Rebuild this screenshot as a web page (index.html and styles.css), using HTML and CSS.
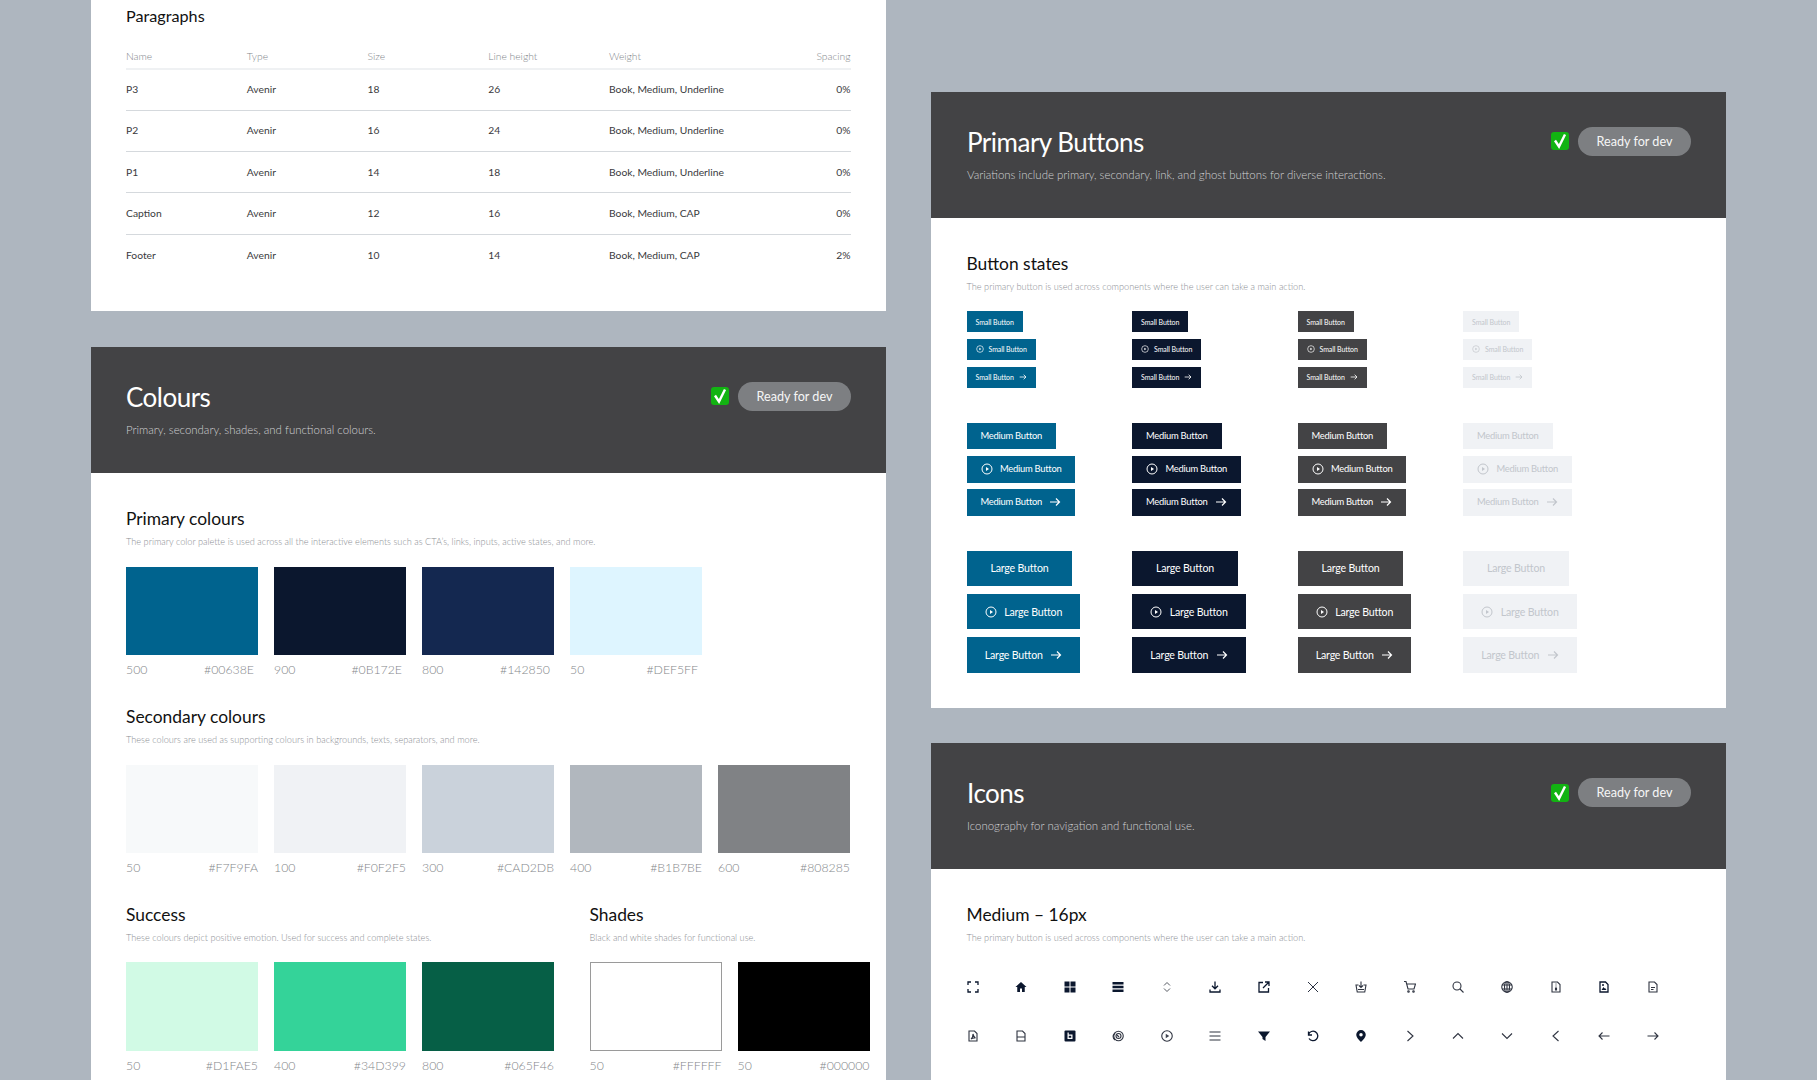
FILE: index.html
```html
<!DOCTYPE html>
<html lang="en">
<head>
<meta charset="utf-8">
<title>Design system</title>
<link rel="stylesheet" href="styles.css">
</head>
<body>
<svg class="sprite" xmlns="http://www.w3.org/2000/svg">
  <symbol id="play" viewBox="0 0 24 24"><circle cx="12" cy="12" r="10" fill="none" stroke="currentColor" stroke-width="2"/><path d="M10 8l6 4-6 4z" fill="currentColor"/></symbol>
  <symbol id="arrow" viewBox="0 0 24 24"><path d="M2 12h19M14 5l7 7-7 7" fill="none" stroke="currentColor" stroke-width="2.4"/></symbol>
  <symbol id="check" viewBox="0 0 18 18"><rect x="0" y="0" width="18" height="18" rx="3" fill="#12b312"/><path d="M4 8.5l4 6 6-12" fill="none" stroke="#fff" stroke-width="2.4"/></symbol>
</svg>
<main class="board">
  <div class="col col-left">
    <section class="panel panel-para">
      <h3 class="h3">Paragraphs</h3>
      <table class="spec">
        <thead><tr><th>Name</th><th>Type</th><th>Size</th><th>Line height</th><th>Weight</th><th class="r">Spacing</th></tr></thead>
        <tbody>
          <tr><td>P3</td><td>Avenir</td><td>18</td><td>26</td><td>Book, Medium, Underline</td><td class="r">0%</td></tr>
          <tr><td>P2</td><td>Avenir</td><td>16</td><td>24</td><td>Book, Medium, Underline</td><td class="r">0%</td></tr>
          <tr><td>P1</td><td>Avenir</td><td>14</td><td>18</td><td>Book, Medium, Underline</td><td class="r">0%</td></tr>
          <tr><td>Caption</td><td>Avenir</td><td>12</td><td>16</td><td>Book, Medium, CAP</td><td class="r">0%</td></tr>
          <tr><td>Footer</td><td>Avenir</td><td>10</td><td>14</td><td>Book, Medium, CAP</td><td class="r">2%</td></tr>
        </tbody>
      </table>
    </section>

    <section class="panel">
      <header class="head">
        <div>
          <h2 class="h2">Colours</h2>
          <p class="lead">Primary, secondary, shades, and functional colours.</p>
        </div>
        <div class="status"><svg class="tick"><use href="#check"/></svg><span class="pill">Ready for dev</span></div>
      </header>
      <div class="body body-colours">
        <h3 class="h3">Primary colours</h3>
        <p class="sub">The primary color palette is used across all the interactive elements such as CTA’s, links, inputs, active states, and more.</p>
        <div class="swatches inset">
          <div class="swatch"><div class="chip c-00638e"></div><div class="meta"><span>500</span><span>#00638E</span></div></div>
          <div class="swatch"><div class="chip c-0b172e"></div><div class="meta"><span>900</span><span>#0B172E</span></div></div>
          <div class="swatch"><div class="chip c-142850"></div><div class="meta"><span>800</span><span>#142850</span></div></div>
          <div class="swatch"><div class="chip c-def5ff"></div><div class="meta"><span>50</span><span>#DEF5FF</span></div></div>
        </div>
        <h3 class="h3 next">Secondary colours</h3>
        <p class="sub">These colours are used as supporting colours in backgrounds, texts, separators, and more.</p>
        <div class="swatches">
          <div class="swatch"><div class="chip c-f7f9fa"></div><div class="meta"><span>50</span><span>#F7F9FA</span></div></div>
          <div class="swatch"><div class="chip c-f0f2f5"></div><div class="meta"><span>100</span><span>#F0F2F5</span></div></div>
          <div class="swatch"><div class="chip c-cad2db"></div><div class="meta"><span>300</span><span>#CAD2DB</span></div></div>
          <div class="swatch"><div class="chip c-b1b7be"></div><div class="meta"><span>400</span><span>#B1B7BE</span></div></div>
          <div class="swatch"><div class="chip c-808285"></div><div class="meta"><span>600</span><span>#808285</span></div></div>
        </div>
        <div class="pair">
          <div class="group">
            <h3 class="h3">Success</h3>
            <p class="sub">These colours depict positive emotion. Used for success and complete states.</p>
            <div class="swatches">
              <div class="swatch"><div class="chip c-d1fae5"></div><div class="meta"><span>50</span><span>#D1FAE5</span></div></div>
              <div class="swatch"><div class="chip c-34d399"></div><div class="meta"><span>400</span><span>#34D399</span></div></div>
              <div class="swatch"><div class="chip c-065f46"></div><div class="meta"><span>800</span><span>#065F46</span></div></div>
            </div>
          </div>
          <div class="group">
            <h3 class="h3">Shades</h3>
            <p class="sub">Black and white shades for functional use.</p>
            <div class="swatches">
              <div class="swatch"><div class="chip c-ffffff"></div><div class="meta"><span>50</span><span>#FFFFFF</span></div></div>
              <div class="swatch"><div class="chip c-000000"></div><div class="meta"><span>50</span><span>#000000</span></div></div>
            </div>
          </div>
        </div>
      </div>
    </section>
  </div>

  <div class="col col-right">
    <section class="panel">
      <header class="head">
        <div>
          <h2 class="h2">Primary Buttons</h2>
          <p class="lead">Variations include primary, secondary, link, and ghost buttons for diverse interactions.</p>
        </div>
        <div class="status"><svg class="tick"><use href="#check"/></svg><span class="pill">Ready for dev</span></div>
      </header>
      <div class="body body-btn">
        <h3 class="h3">Button states</h3>
        <p class="sub">The primary button is used across components where the user can take a main action.</p>
        <div class="states">
          <div class="state blue">
            <div class="stack sm"><a class="btn">Small Button</a><a class="btn ic"><svg><use href="#play"/></svg>Small Button</a><a class="btn ar">Small Button<svg><use href="#arrow"/></svg></a></div>
            <div class="stack md"><a class="btn">Medium Button</a><a class="btn ic"><svg><use href="#play"/></svg>Medium Button</a><a class="btn ar">Medium Button<svg><use href="#arrow"/></svg></a></div>
            <div class="stack lg"><a class="btn">Large Button</a><a class="btn ic"><svg><use href="#play"/></svg>Large Button</a><a class="btn ar">Large Button<svg><use href="#arrow"/></svg></a></div>
          </div>
          <div class="state navy">
            <div class="stack sm"><a class="btn">Small Button</a><a class="btn ic"><svg><use href="#play"/></svg>Small Button</a><a class="btn ar">Small Button<svg><use href="#arrow"/></svg></a></div>
            <div class="stack md"><a class="btn">Medium Button</a><a class="btn ic"><svg><use href="#play"/></svg>Medium Button</a><a class="btn ar">Medium Button<svg><use href="#arrow"/></svg></a></div>
            <div class="stack lg"><a class="btn">Large Button</a><a class="btn ic"><svg><use href="#play"/></svg>Large Button</a><a class="btn ar">Large Button<svg><use href="#arrow"/></svg></a></div>
          </div>
          <div class="state grey">
            <div class="stack sm"><a class="btn">Small Button</a><a class="btn ic"><svg><use href="#play"/></svg>Small Button</a><a class="btn ar">Small Button<svg><use href="#arrow"/></svg></a></div>
            <div class="stack md"><a class="btn">Medium Button</a><a class="btn ic"><svg><use href="#play"/></svg>Medium Button</a><a class="btn ar">Medium Button<svg><use href="#arrow"/></svg></a></div>
            <div class="stack lg"><a class="btn">Large Button</a><a class="btn ic"><svg><use href="#play"/></svg>Large Button</a><a class="btn ar">Large Button<svg><use href="#arrow"/></svg></a></div>
          </div>
          <div class="state off">
            <div class="stack sm"><a class="btn">Small Button</a><a class="btn ic"><svg><use href="#play"/></svg>Small Button</a><a class="btn ar">Small Button<svg><use href="#arrow"/></svg></a></div>
            <div class="stack md"><a class="btn">Medium Button</a><a class="btn ic"><svg><use href="#play"/></svg>Medium Button</a><a class="btn ar">Medium Button<svg><use href="#arrow"/></svg></a></div>
            <div class="stack lg"><a class="btn">Large Button</a><a class="btn ic"><svg><use href="#play"/></svg>Large Button</a><a class="btn ar">Large Button<svg><use href="#arrow"/></svg></a></div>
          </div>
        </div>
      </div>
    </section>

    <section class="panel">
      <header class="head">
        <div>
          <h2 class="h2">Icons</h2>
          <p class="lead">Iconography for navigation and functional use.</p>
        </div>
        <div class="status"><svg class="tick"><use href="#check"/></svg><span class="pill">Ready for dev</span></div>
      </header>
      <div class="body body-icons">
        <h3 class="h3">Medium – 16px</h3>
        <p class="sub">The primary button is used across components where the user can take a main action.</p>
        <div class="icons">
          <svg viewBox="0 0 24 24" class="line thick"><path d="M2 8V2h6M16 2h6v6M22 16v6h-6M8 22H2v-6"/></svg>
          <svg viewBox="0 0 24 24" class="solid"><path d="M12 2L1 12h3.500v10h5.500v-7h4v7h5.500V12H23z"/></svg>
          <svg viewBox="0 0 24 24" class="solid"><path d="M1 1h10v10H1zM13 1h10v10H13zM1 13h10v10H1zM13 13h10v10H13z"/></svg>
          <svg viewBox="0 0 24 24" class="solid"><path d="M1 2h22v5H1zM1 9.500h22v5H1zM1 17h22v5H1z"/></svg>
          <svg viewBox="0 0 24 24" class="line soft"><path d="M6 9l6-6 6 6M6 15l6 6 6-6"/></svg>
          <svg viewBox="0 0 24 24" class="line thick"><path d="M12 1v14M6 9.500l6 6 6-6M2 17v5h20v-5"/></svg>
          <svg viewBox="0 0 24 24" class="line thick"><path d="M10 3H2v19h19v-8M14 2h8v8M22 2L10 14"/></svg>
          <svg viewBox="0 0 24 24" class="line"><path d="M2 2l20 20M22 2L2 22"/></svg>
          <svg viewBox="0 0 24 24" class="line mid"><path d="M12 1v12M8 9l4 4 4-4M7 8H2l2.500 14h15L22 8h-5M6 17h12"/></svg>
          <svg viewBox="0 0 24 24" class="line mid"><path d="M0 1h4l4 15h12l3-10H6"/><circle cx="9" cy="21" r="1.500"/><circle cx="19" cy="21" r="1.500"/></svg>
          <svg viewBox="0 0 24 24" class="line mid"><circle cx="10" cy="10" r="8"/><path d="M16 16l7 7"/></svg>
          <svg viewBox="0 0 24 24" class="line mid"><circle cx="12" cy="12" r="10.500"/><ellipse cx="12" cy="12" rx="5" ry="10.500"/><path d="M2 8h20M2 16h20M12 1v22"/></svg>
          <svg viewBox="0 0 24 24" class="line mid"><path d="M4 2h11l5 5v15H4zM11 6h2M11 10h2M11 14h2v4h-2z"/></svg>
          <svg viewBox="0 0 24 24" class="line dark"><path d="M4 2h11l5 5v15H4z"/><path class="fill" d="M7 18l4-6 2 3 1-1 3 4z"/><circle class="fill" cx="10" cy="8" r="2"/></svg>
          <svg viewBox="0 0 24 24" class="line mid"><path d="M4 2h11l5 5v15H4zM8 13h8M8 17h5"/></svg>

          <svg viewBox="0 0 24 24" class="line mid"><path d="M4 2h11l5 5v15H4zM8 18c3-2 4-6 4-10 1 4 2 7 5 8-4-1-6 0-9 2z"/></svg>
          <svg viewBox="0 0 24 24" class="line mid"><path d="M4 2h11l5 5v15H4zM4 14h16"/></svg>
          <svg viewBox="0 0 24 24"><path class="box" d="M3 1h18a2 2 0 0 1 2 2v18a2 2 0 0 1-2 2H3a2 2 0 0 1-2-2V3a2 2 0 0 1 2-2z"/><path class="cut" d="M7 5h2.500v4H17v9H7zM9.500 11.500v4H14.500v-4z" fill-rule="evenodd"/></svg>
          <svg viewBox="0 0 24 24" class="line mid"><circle cx="13" cy="12" r="5"/><circle cx="13" cy="12" r="9.500"/><path d="M6 6c-5 5-5 10 0 14M10 10l4 4"/></svg>
          <svg viewBox="0 0 24 24" class="line mid"><circle cx="12" cy="12" r="10.500"/><path class="fill" d="M9.500 7.500l7 4.500-7 4.500z"/></svg>
          <svg viewBox="0 0 24 24" class="line mid"><path d="M1 4h22M1 12h22M1 20h22"/></svg>
          <svg viewBox="0 0 24 24" class="solid"><path d="M0 3h24L15 14v8l-6-4v-4z"/></svg>
          <svg viewBox="0 0 24 24" class="line thick"><path d="M3 3v7h7M3 9a9.500 9.500 0 1 1 1 8"/></svg>
          <svg viewBox="0 0 24 24" class="solid"><path fill-rule="evenodd" d="M12 0a9.500 9.500 0 0 0-9.500 9.500C2.500 16 12 24 12 24s9.500-8 9.500-14.500A9.500 9.500 0 0 0 12 0zm0 6a3.500 3.500 0 1 1 0 7 3.500 3.500 0 0 1 0-7z"/></svg>
          <svg viewBox="0 0 24 24" class="line mid"><path d="M7 2l11 10L7 22"/></svg>
          <svg viewBox="0 0 24 24" class="line mid"><path d="M2 17L12 7l10 10"/></svg>
          <svg viewBox="0 0 24 24" class="line mid"><path d="M2 7l10 10L22 7"/></svg>
          <svg viewBox="0 0 24 24" class="line mid"><path d="M17 2L6 12l11 10"/></svg>
          <svg viewBox="0 0 24 24" class="line mid"><path d="M23 12H2M9 5l-7 7 7 7"/></svg>
          <svg viewBox="0 0 24 24" class="line mid"><path d="M1 12h21M15 5l7 7-7 7"/></svg>
        </div>
      </div>
    </section>
  </div>
</main>
</body>
</html>
```

FILE: styles.css
```css
* { box-sizing: border-box; }
html, body { margin: 0; padding: 0; height: 1080px; overflow: hidden; }
body { background: #aeb6bf; font-family: "Lato", "Liberation Sans", sans-serif; color: #1b1b1d; }
.sprite { display: none; }

.board { display: flex; gap: 45px; padding-left: 91px; align-items: flex-start; }
.col { width: 795px; flex: none; display: flex; flex-direction: column; }
.col-left { gap: 35.7px; }
.col-right { gap: 35.3px; padding-top: 91.5px; }

.panel { background: #fff; }
.panel-para { height: 311px; padding: 5.5px 35px 0; }

.h3 { margin: 0; font-size: 17.4px; line-height: 20px; font-weight: 400; color: #111; }
.panel-para .h3 { font-size: 16.2px; }
.next { margin-top: 28.7px; }
.sub { margin: 6px 0 17.7px; font-size: 9.2px; line-height: 14px; font-weight: 300; color: #8b8e93; white-space: nowrap; }
.body-btn .sub { margin-bottom: 17.300px; }

.spec { width: 724.500px; margin-top: 20.500px; border-collapse: collapse; table-layout: fixed; font-size: 10.300px; }
.spec th { height: 23px; padding: 0 0 2px; text-align: left; font-weight: 300; color: #82868b; border-bottom: 2px solid #eff1f3; }
.spec td { height: 41.300px; padding: 0 0 1px; color: #3a3a3d; border-bottom: 1px solid #d5d9dd; }
.spec tr:last-child td { border-bottom: 0; }
.spec .r { text-align: right; }

.head { height: 126.500px; padding: 33px 35px 0; background: #434345; display: flex; justify-content: space-between; align-items: flex-start; color: #fff; }
.col-right .head { padding-left: 36px; }
.h2 { margin: 0; font-size: 26px; line-height: 34px; font-weight: 400; letter-spacing: -0.5px; }
.lead { margin: 8px 0 0; font-size: 11.450px; line-height: 16px; font-weight: 300; color: #d0d1d3; }
.status { display: flex; align-items: center; gap: 9px; padding-top: 2px; }
.tick { width: 18px; height: 18px; }
.pill { width: 113px; height: 29.500px; border-radius: 15px; background: #7d7f82; display: flex; align-items: center; justify-content: center; font-size: 12.600px; color: #f6f6f6; }

.body { padding: 36px 35px 0; }
.col-right .body { padding-left: 35.500px; }
.body-btn { padding-bottom: 35px; }
.body-colours { padding-bottom: 40px; }
.body-icons { padding-bottom: 60px; }

.swatches { display: flex; gap: 16px; }
.swatch { width: 132px; flex: none; }
.chip { height: 88.300px; }
.meta { margin-top: 7px; display: flex; justify-content: space-between; font-size: 12.300px; line-height: 16px; font-weight: 300; color: #84878b; }
.inset .meta { padding-right: 4px; }

.c-00638e { background: #00638e; }
.c-0b172e { background: #0b172e; }
.c-142850 { background: #142850; }
.c-def5ff { background: #def5ff; }
.c-f7f9fa { background: #f7f9fa; }
.c-f0f2f5 { background: #f0f2f5; }
.c-cad2db { background: #cad2db; }
.c-b1b7be { background: #b1b7be; }
.c-808285 { background: #808285; }
.c-d1fae5 { background: #d1fae5; }
.c-34d399 { background: #34d399; }
.c-065f46 { background: #065f46; }
.c-ffffff { background: #fff; border: 1px solid #9a9a9a; }
.c-000000 { background: #000; }

.pair { margin-top: 28.700px; display: flex; gap: 35.500px; }
.group { flex: none; }

.states { display: grid; grid-template-columns: repeat(4, 165.500px); }
.state { display: flex; flex-direction: column; gap: 35px; align-items: flex-start; }
.stack { display: flex; flex-direction: column; align-items: flex-start; }
.btn { display: flex; align-items: center; white-space: nowrap; letter-spacing: -0.2px; }
.blue .btn { background: #00638e; color: #fff; }
.navy .btn { background: #0b172e; color: #fff; }
.grey .btn { background: #434345; color: #fff; }
.off .btn { background: #f0f2f5; color: #c2c6cc; }

.sm { gap: 6.700px; }
.sm .btn { height: 21px; padding: 0 9px; font-size: 7px; letter-spacing: -0.08px; }
.sm svg { width: 8px; height: 8px; }
.sm .ic svg { margin-right: 5px; }
.sm .ar svg { margin-left: 5px; }

.md { gap: 6.500px; }
.md .btn { height: 26.700px; padding: 0 14px 1px; font-size: 9.400px; letter-spacing: -0.25px; }
.md svg { width: 12px; height: 12px; }
.md .ic svg { margin-right: 7.400px; }
.md .ar svg { margin-left: 7.400px; }

.lg { gap: 8px; }
.lg .btn { height: 35.300px; padding: 0 24px; font-size: 10.600px; }
.lg svg { width: 12px; height: 12px; }
.lg .ic, .lg .ar { padding: 0 18.300px; }
.lg .ic svg { margin-right: 7.400px; }
.lg .ar svg { margin-left: 7.400px; }

.icons { margin-top: 36px; display: grid; grid-template-columns: repeat(15, 12px); column-gap: 36.600px; row-gap: 36.600px; }
.icons svg { width: 12px; height: 12px; display: block; }
.line { fill: none; stroke: #2b3242; stroke-width: 2; }
.line.thick { stroke: #0b172e; stroke-width: 2.600; }
.line.mid { stroke: #2f3441; stroke-width: 2.200; }
.line.soft { stroke: #4d515b; stroke-width: 1.900; }
.line.dark { stroke: #0b172e; stroke-width: 2.600; }
.solid { fill: #0b172e; }
.fill { fill: #3f4450; stroke: none; }
.line.dark .fill { fill: #0b172e; }
.box { fill: #0b172e; }
.cut { fill: #fff; }
```
